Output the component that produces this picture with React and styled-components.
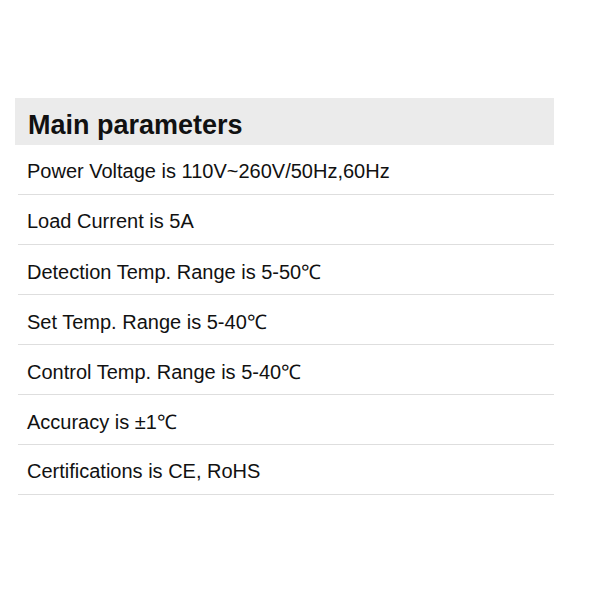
import React from 'react';
import styled, { createGlobalStyle } from 'styled-components';

const GlobalStyle = createGlobalStyle`
  body {
    margin: 0;
    background: #ffffff;
    font-family: "Liberation Sans", Arial, sans-serif;
  }
`;

const params = [
  'Power Voltage is 110V~260V/50Hz,60Hz',
  'Load Current is 5A',
  'Detection Temp. Range is 5-50\u2103',
  'Set Temp. Range is 5-40\u2103',
  'Control Temp. Range is 5-40\u2103',
  'Accuracy is \u00b11\u2103',
  'Certifications is CE, RoHS',
];

function App() {
  return (
    <>
      <GlobalStyle />
      <Page>
        <Section>
          <Header>Main parameters</Header>
          <List>
            {params.map(p => (
              <Row key={p}>{p}</Row>
            ))}
          </List>
        </Section>
      </Page>
    </>
  );
}

export default App;

const Page = styled.div`
  padding-top: 98px;
  padding-left: 15px;
`;
const Section = styled.div`
  width: 539px;
`;
const Header = styled.h2`
  margin: 0;
  height: 47px;
  background: #ebebeb;
  display: flex;
  align-items: center;
  padding-left: 13px;
  padding-top: 8px;
  box-sizing: border-box;
  font-size: 27px;
  font-weight: bold;
  color: #111;
`;
const List = styled.div`
  margin-left: 3px;
`;
const Row = styled.div`
  height: 50px;
  box-sizing: border-box;
  border-bottom: 1px solid #dedede;
  display: flex;
  align-items: center;
  padding-left: 9px;
  padding-top: 3px;
  font-size: 20px;
  color: #111;
`;
